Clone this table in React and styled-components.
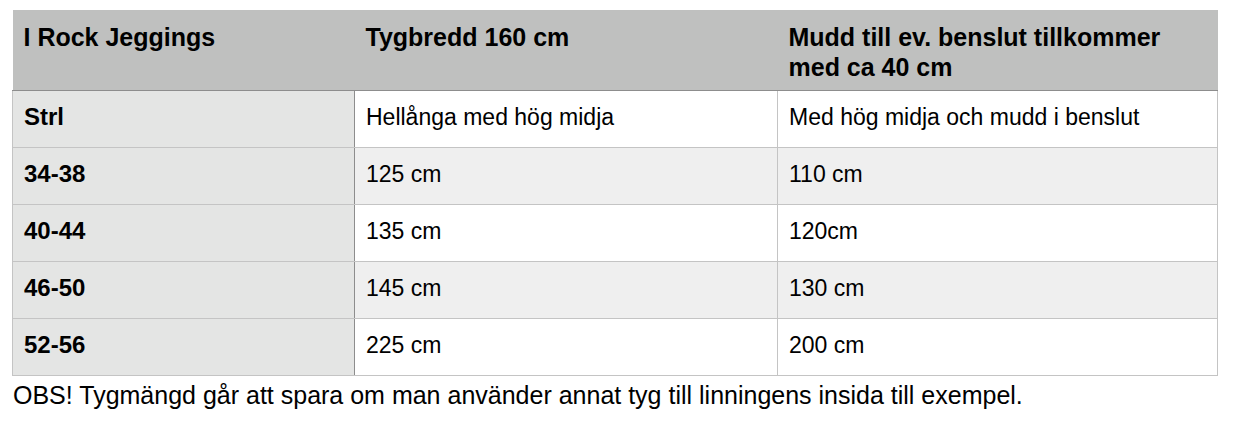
import React from "react";
import styled, { createGlobalStyle } from "styled-components";

const GlobalStyle = createGlobalStyle`
  body {
    margin: 0;
    background: #ffffff;
    font-family: "Liberation Sans", Arial, sans-serif;
    color: #000;
  }
`;

const Page = styled.div`
  padding: 10px 20px 0 12px;
`;

const Table = styled.table`
  width: 1205px;
  border-collapse: collapse;
  table-layout: fixed;
`;

const HeadCell = styled.th`
  background: #bfc0bf;
  text-align: left;
  vertical-align: top;
  font-size: 25px;
  font-weight: bold;
  line-height: 30px;
  height: 80px;
  box-sizing: border-box;
  padding: 12px 11px 8px;
  border-bottom: 1px solid #8d8d8d;
`;

const Row = styled.tr`
  background: ${(p) => (p.$shade ? "#efefef" : "#ffffff")};
`;

const SizeCell = styled.td`
  background: #e4e5e4;
  font-weight: bold;
  font-size: 24px;
  line-height: 26px;
  height: 57px;
  box-sizing: border-box;
  padding: 13px 11px 17px;
  vertical-align: top;
  border-right: 1px solid #8d8d8d;
  border-bottom: 1px solid #c4c4c4;
  border-left: 1px solid #c4c4c4;
`;

const Cell = styled.td`
  font-size: 23px;
  line-height: 26px;
  height: 57px;
  box-sizing: border-box;
  padding: 13px 11px 17px;
  vertical-align: top;
  border-right: 1px solid #c4c4c4;
  border-bottom: 1px solid #c4c4c4;
`;

const Note = styled.p`
  margin: 4px 0 0 1px;
  font-size: 25px;
  line-height: 30px;
`;

const rows = [
  ["Strl", "Hellånga med hög midja", "Med hög midja och mudd i benslut"],
  ["34-38", "125 cm", "110 cm"],
  ["40-44", "135 cm", "120cm"],
  ["46-50", "145 cm", "130 cm"],
  ["52-56", "225 cm", "200 cm"],
];

export default function App() {
  return (
    <Page>
      <GlobalStyle />
      <Table>
        <colgroup>
          <col style={{ width: 342 }} />
          <col style={{ width: 423 }} />
          <col style={{ width: 440 }} />
        </colgroup>
        <thead>
          <tr>
            <HeadCell>I Rock Jeggings</HeadCell>
            <HeadCell>Tygbredd 160 cm</HeadCell>
            <HeadCell>Mudd till ev. benslut tillkommer med ca 40 cm</HeadCell>
          </tr>
        </thead>
        <tbody>
          {rows.map((r, i) => (
            <Row key={r[0]} $shade={i % 2 === 1}>
              <SizeCell>{r[0]}</SizeCell>
              <Cell>{r[1]}</Cell>
              <Cell>{r[2]}</Cell>
            </Row>
          ))}
        </tbody>
      </Table>
      <Note>
        OBS! Tygmängd går att spara om man använder annat tyg till linningens insida till exempel.
      </Note>
    </Page>
  );
}
